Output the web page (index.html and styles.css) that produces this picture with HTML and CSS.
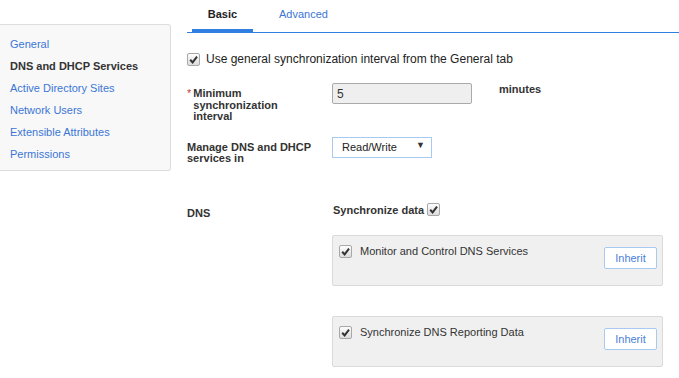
FILE: index.html
```html
<!DOCTYPE html>
<html lang="en">
<head>
  <meta charset="UTF-8">
  <title>Grid Member Properties</title>
  <link rel="stylesheet" href="styles.css">
</head>
<body>
  <div class="page">
    <div class="sidebar">
      <a class="nav-item">General</a>
      <a class="nav-item active">DNS and DHCP Services</a>
      <a class="nav-item">Active Directory Sites</a>
      <a class="nav-item">Network Users</a>
      <a class="nav-item">Extensible Attributes</a>
      <a class="nav-item">Permissions</a>
    </div>
    <div class="main">
      <div class="tabs">
        <div class="tab active">Basic</div>
        <div class="tab">Advanced</div>
      </div>

      <label class="check-row">
        <span class="check"><svg viewBox="0 0 10 10"><path d="M2 5.2 L4.2 7.6 L8.2 2.4" /></svg></span>
        <span>Use general synchronization interval from the General tab</span>
      </label>

      <div class="form-row interval">
        <div class="label"><span class="req">*</span><span>Minimum synchronization interval</span></div>
        <input class="text-input" type="text" value="5" disabled>
        <div class="unit">minutes</div>
      </div>

      <div class="form-row manage">
        <div class="label">Manage DNS and DHCP services in</div>
        <div class="select">Read/Write <span class="arrow">&#9660;</span></div>
      </div>

      <div class="form-row dns">
        <div class="label">DNS</div>
        <div class="dns-body">
          <div class="sync">Synchronize data <span class="check"><svg viewBox="0 0 10 10"><path d="M2 5.2 L4.2 7.6 L8.2 2.4" /></svg></span></div>
          <div class="panel">
            <span class="check"><svg viewBox="0 0 10 10"><path d="M2 5.2 L4.2 7.6 L8.2 2.4" /></svg></span>
            <span class="panel-text">Monitor and Control DNS Services</span>
            <button class="inherit">Inherit</button>
          </div>
          <div class="panel">
            <span class="check"><svg viewBox="0 0 10 10"><path d="M2 5.2 L4.2 7.6 L8.2 2.4" /></svg></span>
            <span class="panel-text">Synchronize DNS Reporting Data</span>
            <button class="inherit">Inherit</button>
          </div>
        </div>
      </div>
    </div>
  </div>
</body>
</html>
```

FILE: styles.css
```css
body {
  margin: 0;
  font-family: "Liberation Sans", Arial, sans-serif;
  font-size: 11px;
  color: #333;
  background: #fff;
}
.page {
  display: flex;
  align-items: flex-start;
}
.sidebar {
  width: 171px;
  box-sizing: border-box;
  margin-top: 24px;
  padding: 8px 0 5px 10px;
  background: #f8f8f8;
  border: 1px solid #dddddd;
  border-left: none;
  border-radius: 0 3px 3px 0;
  display: flex;
  flex-direction: column;
}
.nav-item {
  height: 22px;
  line-height: 22px;
  color: #3b76d6;
}
.nav-item.active {
  color: #333;
  font-weight: bold;
}
.main {
  flex: 1;
  margin-left: 16px;
}
.tabs {
  display: flex;
  gap: 20px;
  height: 32px;
  border-bottom: 1px solid #2f7ee0;
}
.tab {
  width: 61px;
  height: 32px;
  box-sizing: border-box;
  line-height: 29px;
  text-align: center;
  color: #3b76d6;
  font-size: 11px;
}
.tab:first-child { margin-left: 5px; }
.tab.active {
  color: #222;
  font-weight: bold;
  border-bottom: 3px solid #2f7ee0;
}
.check {
  display: inline-flex;
  width: 11px;
  height: 11px;
  border: 1px solid #a8a8a8;
  border-radius: 2px;
  background: linear-gradient(#fdfdfd, #dcdcdc);
  box-sizing: content-box;
  vertical-align: middle;
}
.check svg {
  width: 11px;
  height: 11px;
  fill: none;
  stroke: #333;
  stroke-width: 1.8;
}
.check-row {
  display: flex;
  align-items: center;
  gap: 6px;
  margin-top: 19px;
  color: #222;
  font-size: 12px;
}
.form-row {
  display: flex;
  align-items: flex-start;
}
.label {
  width: 145px;
  padding-right: 14px;
  box-sizing: border-box;
  flex-shrink: 0;
  font-weight: bold;
  line-height: 11.5px;
  color: #333;
}
.interval { margin-top: 17px; }
.interval .label {
  display: flex;
  padding-top: 5px;
}
.req {
  color: #c4412f;
  margin-right: 2px;
  font-weight: normal;
}
.text-input {
  width: 140px;
  height: 21px;
  box-sizing: border-box;
  margin: 0;
  padding: 0 4px;
  border: 1px solid #aaaaaa;
  border-radius: 2px;
  background: #efefef;
  font: inherit;
  font-size: 12px;
  color: #333;
}
.unit {
  margin-left: 27px;
  font-weight: bold;
}
.manage { margin-top: 14px; }
.manage .label { padding-top: 5px; }
.select {
  width: 100px;
  height: 21px;
  box-sizing: border-box;
  border: 1px solid #a8caf0;
  padding: 0 6px 0 9px;
  line-height: 19px;
  display: flex;
  justify-content: space-between;
  align-items: center;
  color: #222;
}
.arrow {
  font-size: 9px;
  color: #333;
  margin-top: -3px;
}
.dns { margin-top: 39px; }
.dns .label { padding-top: 4px; }
.dns-body {
  width: 331px;
}
.sync {
  font-weight: bold;
  display: flex;
  align-items: center;
  gap: 3px;
  height: 12px;
  margin-left: 1px;
}
.panel {
  margin-top: 19px;
  height: 51px;
  box-sizing: border-box;
  background: #f0f0f0;
  border: 1px solid #dadada;
  border-radius: 2px;
  display: flex;
  align-items: flex-start;
  padding: 9px 5px 0 6px;
}
.panel + .panel { margin-top: 30px; }
.panel-text {
  margin-left: 8px;
  flex: 1;
  font-size: 11px;
  color: #333;
}
.inherit {
  margin-top: 2px;
  width: 53px;
  height: 22px;
  border: 1px solid #a8caf0;
  border-radius: 2px;
  background: #fff;
  color: #4a7fd8;
  font: inherit;
  font-size: 11px;
  padding: 0;
}
```
